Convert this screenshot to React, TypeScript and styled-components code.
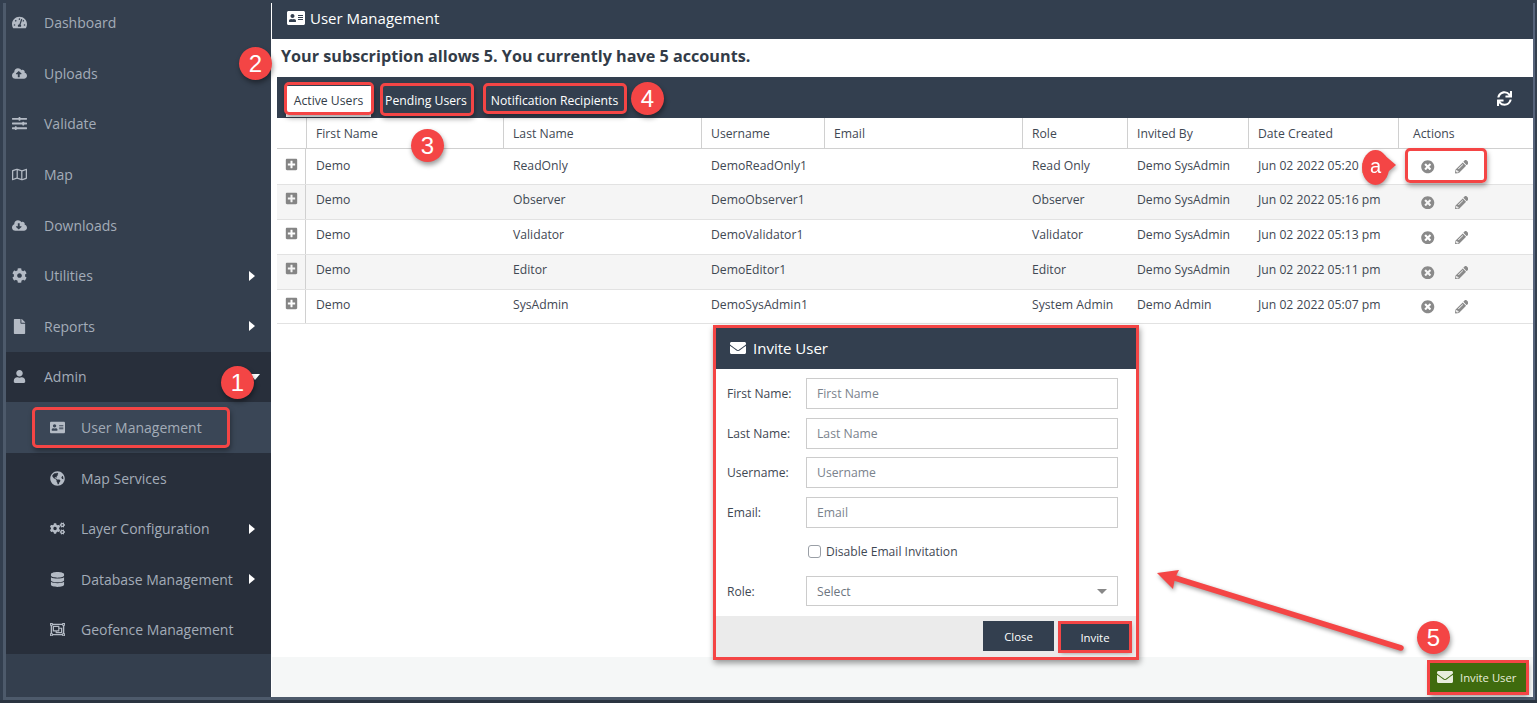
import React from "react";
import styled, { createGlobalStyle } from "styled-components";
import { FaTachometerAlt, FaCloudUploadAlt, FaSlidersH, FaRegMap, FaCloudDownloadAlt, FaCog, FaFile, FaUser, FaAddressCard, FaGlobeAmericas, FaCogs, FaDatabase, FaRegObjectGroup, FaEnvelope, FaSync, FaPlusSquare, FaTimesCircle, FaPencilAlt } from "react-icons/fa";

const Global = createGlobalStyle`
  html, body { margin: 0; padding: 0; background: #2a3340; }
  body { font-family: "Open Sans", "Liberation Sans", sans-serif; overflow: hidden; }
  * { box-sizing: border-box; }
`;

const Frame = styled.div`
  position: relative; width: 1537px; height: 703px; padding: 3px 0 3px 3px; overflow: hidden;
  background: linear-gradient(to bottom, #333f4f 700px, #2a3440 700px);
`;
const Shell = styled.div`
  display: flex; width: 1532px; height: 697px; border-left: 3px solid #4d5a6b; border-bottom: 3px solid #4d5a6b; border-right: 2px solid #56637a;
`;
const Sidebar = styled.nav`
  width: 265px; flex: none; margin-top: -5.5px; background: #343f4e; display: flex; flex-direction: column;
`;
const NavItem = styled.div<{ $sub?: boolean; $active?: boolean }>`
  position: relative; height: 50.6px; flex: none; display: flex; align-items: center;
  padding-left: ${p => (p.$sub ? 75 : 38)}px; color: #a3acb8; font-size: 14px;
  background: ${p => (p.$active ? "#3a4656" : "transparent")};
`;
const NavIcon = styled.span<{ $sub?: boolean; $size?: number }>`
  position: absolute; left: ${p => (p.$sub ? 42 : 4)}px; width: 18px; display: flex; justify-content: center; color: #b4bbc5; font-size: ${p => p.$size ?? 15}px;
`;
const Caret = styled.span`
  position: absolute; left: 243px; top: 50%; margin-top: -5px; width: 0; height: 0;
  border-left: 6px solid #fff; border-top: 5px solid transparent; border-bottom: 5px solid transparent;
`;
const CaretDown = styled.span`
  position: absolute; left: 244px; top: 50%; margin-top: -3px; width: 0; height: 0;
  border-top: 6px solid #fff; border-left: 5px solid transparent; border-right: 5px solid transparent;
`;
const AdminGroup = styled.div`
  background: #282f3b; display: flex; flex-direction: column; height: 302px; flex: none;
`;
const Main = styled.main`
  flex: 1; min-width: 0; background: #fff; display: flex; flex-direction: column; border-left: 1px solid #fff;
`;
const TitleBar = styled.header`
  height: 36px; flex: none; background: #333f4f; color: #fff; display: flex; align-items: center; gap: 5px; padding: 0 0 6px 15px; font-size: 15px;
`;
const Subscription = styled.h2`
  margin: 0; height: 38px; flex: none; display: flex; align-items: center; padding: 0 0 4px 9px; font-size: 16.2px; font-weight: 700; color: #333c48;
`;
const Content = styled.div`
  flex: 1; min-height: 0; padding-left: 5px;
`;
const Toolbar = styled.div`
  height: 41px; background: #333f4f; display: flex; align-items: flex-end; padding-left: 8px; position: relative;
`;
const Tab = styled.div<{ $active?: boolean; $w: number; $gap?: number }>`
  width: ${p => p.$w}px; height: 33px; margin-left: ${p => p.$gap ?? 0}px; display: flex; align-items: center; justify-content: center; font-size: 12.2px;
  color: ${p => (p.$active ? "#333c48" : "#fff")}; background: ${p => (p.$active ? "#fff" : "transparent")};
  padding-bottom: 3px;
  ${p => p.$active && "box-shadow: inset 0 0 0 1px #333f4f;"}
`;
const Refresh = styled.span`
  position: absolute; right: 21px; top: 14px; color: #fff; font-size: 15px; display: flex;
`;
const Grid = "29px 197px 198px 123px 198px 105px 121px 150px 135px";
const Head = styled.div`
  display: grid; grid-template-columns: ${Grid}; height: 31px; border-bottom: 1px solid #d0d0d0;
`;
const HeadCell = styled.div`
  display: flex; align-items: center; padding-left: 9px; font-size: 12.2px; color: #3f4853; border-left: 1px solid #d0d0d0;
  &:first-child { border-left: 0; }
  &:last-child { padding-left: 14px; }
`;
const Row = styled.div<{ $alt?: boolean; $h: number; $lift: number }>`
  --lift: ${p => p.$lift}px;
  display: grid; grid-template-columns: ${Grid}; height: ${p => p.$h}px; border-bottom: 1px solid #e2e2e2; background: ${p => (p.$alt ? "#f5f5f5" : "#fff")};
`;
const Cell = styled.div`
  display: flex; align-items: center; padding-left: 10px; font-size: 12.2px; color: #3f4853; padding-bottom: var(--lift); white-space: nowrap;
`;
const ExpandCell = styled.div`
  display: flex; align-items: center; justify-content: center; color: #858585; font-size: 13px; border-right: 1px solid #d0d0d0; padding-bottom: calc(var(--lift) + 2px);
`;
const Actions = styled.div`
  display: flex; align-items: center; gap: 20px; padding: 0 0 calc(var(--lift) - 5px) 23px; margin-top: 1px; color: #8a8a8a; font-size: 13.5px;
`;
const Footer = styled.footer`
  height: 40px; flex: none; background: #f5f7f7; display: flex; justify-content: flex-end; align-items: center; padding-right: 6px;
`;
const InviteBtn = styled.div`
  width: 98px; height: 31px; background: #3f6b0e; color: #e8eddc; font-size: 11.3px; display: flex; align-items: center; gap: 7px; padding-left: 8px;
  outline: 3px solid #f44545; outline-offset: -1px; box-shadow: 1px 3px 5px rgba(0,0,0,.45);
  & svg { font-size: 16px; }
`;
const Body = styled.div`
  flex: 1; min-height: 0; background: #fff; display: flex; flex-direction: column;
`;

/* overlays */
const Modal = styled.section`
  position: absolute; left: 713px; top: 325px; width: 426px; height: 335px; border: 3px solid #f44545; background: #fff;
  display: flex; flex-direction: column; box-shadow: 1px 3px 6px rgba(0,0,0,.4);
`;
const ModalHead = styled.div`
  height: 41px; flex: none; background: #333f4f; color: #fff; font-size: 15px; display: flex; align-items: center; gap: 7px; padding: 0 0 2px 14px;
  & svg { font-size: 16px; }
`;
const ModalBody = styled.div`
  flex: 1; padding: 5px 17px 0 11px; display: flex; flex-direction: column;
`;
const Field = styled.label`
  display: grid; grid-template-columns: 79px 1fr; align-items: center; height: 39.6px; font-size: 12.1px; color: #3f4853;
`;
const Input = styled.input`
  height: 31px; width: 312px; border: 1px solid #ccc; padding: 0 10px; font: 12.2px "Open Sans", sans-serif; color: #333;
  &::placeholder { color: #7b838d; opacity: 1; }
`;
const CheckRow = styled.div`
  display: flex; align-items: center; gap: 5px; height: 36px; margin: 1px 0 2px 81px; font-size: 12.1px; color: #3f4853;
`;
const CheckBox = styled.span`
  width: 13px; height: 13px; border: 1px solid #9a9fa6; border-radius: 3px; background: #fff;
`;
const SelectBox = styled.div`
  position: relative; height: 30px; width: 312px; border: 1px solid #ccc; padding: 0 10px; font-size: 12.2px; color: #6d7580; display: flex; align-items: center;
  &::after { content: ""; position: absolute; right: 10px; top: 12px; border-top: 5px solid #888; border-left: 5px solid transparent; border-right: 5px solid transparent; }
`;
const ModalFoot = styled.div`
  height: 41px; flex: none; background: #ebebeb; display: flex; justify-content: flex-end; align-items: flex-end; gap: 6px; padding: 0 6px 6px 0;
`;
const Btn = styled.div<{ $marked?: boolean }>`
  width: ${p => (p.$marked ? 70 : 71)}px; height: ${p => (p.$marked ? 28 : 30)}px; background: #333f4f; color: #fff; font-size: 11.4px; display: flex; align-items: center; justify-content: center;
  ${p => p.$marked && "outline: 3px solid #f44545; outline-offset: -1px; box-shadow: 1px 2px 4px rgba(0,0,0,.4);"}
`;
const Mark = styled.div<{ $x: number; $y: number; $w: number; $h: number }>`
  position: absolute; left: ${p => p.$x}px; top: ${p => p.$y}px; width: ${p => p.$w}px; height: ${p => p.$h}px;
  border: 3px solid #f44545; border-radius: 5px; box-shadow: 1px 3px 5px rgba(0,0,0,.35); pointer-events: none;
`;
const Badge = styled.div<{ $x: number; $y: number }>`
  position: absolute; left: ${p => p.$x}px; top: ${p => p.$y}px; width: 33px; height: 33px; border-radius: 50%;
  background: #f44545; color: #fff; font: 24px "Liberation Sans", sans-serif; display: flex; align-items: center; justify-content: center;
  box-shadow: 1px 3px 5px rgba(0,0,0,.4);
`;
const Callout = styled.div`
  position: absolute; left: 1362px; top: 150px; width: 27px; height: 35px; border-radius: 50%; background: #f44545; color: #fff;
  font: 20px "Liberation Sans", sans-serif; display: flex; align-items: center; justify-content: center; padding-bottom: 2px;
  filter: drop-shadow(1px 2px 2px rgba(0,0,0,.35));
  &::after { content: ""; position: absolute; left: 20px; top: 3px; border-left: 14px solid #f44545; border-top: 12px solid transparent; border-bottom: 12px solid transparent; }
`;
const ArrowSvg = styled.svg`
  position: absolute; left: 1150px; top: 565px; overflow: visible; filter: drop-shadow(1px 2px 2px rgba(0,0,0,.4));
`;

const top = [
  [FaTachometerAlt, "Dashboard"], [FaCloudUploadAlt, "Uploads"], [FaSlidersH, "Validate"], [FaRegMap, "Map"], [FaCloudDownloadAlt, "Downloads"], [FaCog, "Utilities", 1], [FaFile, "Reports", 1],
] as const;
const subs = [
  [FaAddressCard, "User Management", 0, 1], [FaGlobeAmericas, "Map Services"], [FaCogs, "Layer Configuration", 1], [FaDatabase, "Database Management", 1], [FaRegObjectGroup, "Geofence Management"],
] as const;
const users = [
  ["ReadOnly", "DemoReadOnly1", "Read Only", "Demo SysAdmin", "Jun 02 2022 05:20 pm"],
  ["Observer", "DemoObserver1", "Observer", "Demo SysAdmin", "Jun 02 2022 05:16 pm"],
  ["Validator", "DemoValidator1", "Validator", "Demo SysAdmin", "Jun 02 2022 05:13 pm"],
  ["Editor", "DemoEditor1", "Editor", "Demo SysAdmin", "Jun 02 2022 05:11 pm"],
  ["SysAdmin", "DemoSysAdmin1", "System Admin", "Demo Admin", "Jun 02 2022 05:07 pm"],
];

export default function App() {
  return (
    <Frame>
      <Global />
      <Shell>
        <Sidebar>
          {top.map(([I, t, c]: any) => (
            <NavItem key={t}><NavIcon><I /></NavIcon>{t}{c ? <Caret /> : null}</NavItem>
          ))}
          <AdminGroup>
            <NavItem><NavIcon $size={13}><FaUser /></NavIcon>Admin<CaretDown /></NavItem>
            {subs.map(([I, t, c, a]: any) => (
              <NavItem key={t} $sub $active={!!a}><NavIcon $sub><I /></NavIcon>{t}{c ? <Caret /> : null}</NavItem>
            ))}
          </AdminGroup>
        </Sidebar>
        <Main>
          <TitleBar><FaAddressCard size={18} />User Management</TitleBar>
          <Subscription>Your subscription allows 5. You currently have 5 accounts.</Subscription>
          <Body>
            <Content>
              <Toolbar>
                <Tab $active $w={87}>Active Users</Tab>
                <Tab $w={94} $gap={7}>Pending Users</Tab>
                <Tab $w={143} $gap={10}>Notification Recipients</Tab>
                <Refresh><FaSync /></Refresh>
              </Toolbar>
              <Head>
                {["", "First Name", "Last Name", "Username", "Email", "Role", "Invited By", "Date Created", "Actions"].map(h => <HeadCell key={h}>{h}</HeadCell>)}
              </Head>
              {users.map((u, i) => (
                <Row key={u[1]} $alt={i % 2 === 1} $h={i === 0 ? 36 : i === 4 ? 34 : 35} $lift={i === 0 ? 2 : i === 4 ? 4 : 5}>
                  <ExpandCell><FaPlusSquare /></ExpandCell>
                  <Cell>Demo</Cell><Cell>{u[0]}</Cell><Cell>{u[1]}</Cell><Cell />
                  <Cell>{u[2]}</Cell><Cell>{u[3]}</Cell><Cell>{u[4]}</Cell>
                  <Actions><FaTimesCircle /><FaPencilAlt /></Actions>
                </Row>
              ))}
            </Content>
          </Body>
          <Footer><InviteBtn><FaEnvelope />Invite User</InviteBtn></Footer>
        </Main>
      </Shell>

      <Mark $x={32} $y={407} $w={198} $h={41} />
      <Mark $x={284} $y={82} $w={90} $h={33} />
      <Mark $x={380} $y={83} $w={94} $h={33} />
      <Mark $x={483} $y={83} $w={144} $h={31} />
      <Mark $x={1405} $y={148} $w={82} $h={35} />
      <Badge $x={221} $y={366}>1</Badge>
      <Badge $x={239} $y={47}>2</Badge>
      <Badge $x={411} $y={129}>3</Badge>
      <Badge $x={631} $y={82}>4</Badge>
      <Badge $x={1417} $y={621}>5</Badge>
      <Callout>a</Callout>
      <ArrowSvg width="260" height="100" viewBox="0 0 260 100">
        <path d="M251 83 L25 13" stroke="#f44545" strokeWidth="5.5" strokeLinecap="round" />
        <path d="M7 8 L29 5 L25 13 L23 24 Z" fill="#f44545" />
      </ArrowSvg>

      <Modal>
        <ModalHead><FaEnvelope />Invite User</ModalHead>
        <ModalBody>
          <Field>First Name:<Input placeholder="First Name" /></Field>
          <Field>Last Name:<Input placeholder="Last Name" /></Field>
          <Field>Username:<Input placeholder="Username" /></Field>
          <Field>Email:<Input placeholder="Email" /></Field>
          <CheckRow><CheckBox />Disable Email Invitation</CheckRow>
          <Field>Role:<SelectBox>Select</SelectBox></Field>
        </ModalBody>
        <ModalFoot><Btn>Close</Btn><Btn $marked>Invite</Btn></ModalFoot>
      </Modal>
    </Frame>
  );
}
